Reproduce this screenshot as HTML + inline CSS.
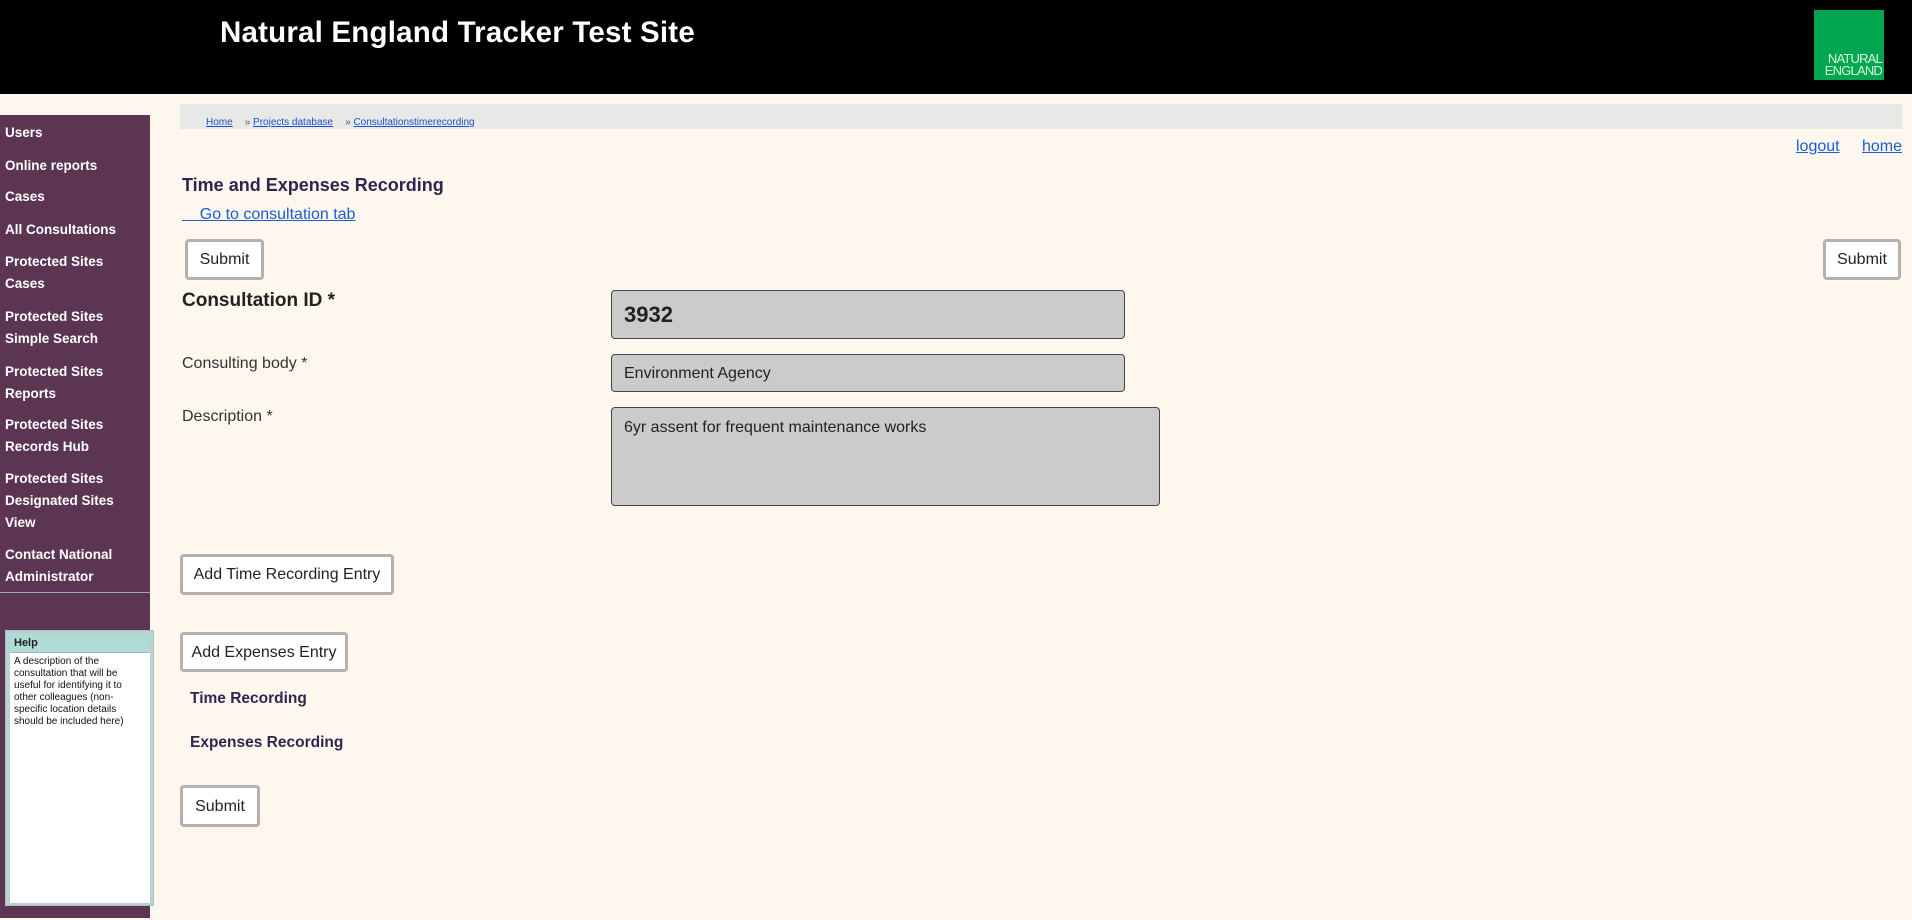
<!DOCTYPE html>
<html><head><meta charset="utf-8"><style>
*{box-sizing:border-box;margin:0;padding:0}
body{width:1912px;height:920px;background:#fef7ee;font-family:"Liberation Sans",sans-serif;position:relative;overflow:hidden;color:#222}
.a{position:absolute}
#hdr{left:0;top:0;width:1912px;height:94px;background:#000}
#title{left:220px;top:16px;color:#fff;font-size:29.5px;font-weight:bold;letter-spacing:0.2px}
#logo{left:1814px;top:10px;width:70px;height:70px;background:#00a650;color:#d8f5e0;font-size:13px;line-height:12px;text-align:right;padding:43px 2px 0 0;letter-spacing:-0.8px}
#side{left:0;top:115px;width:150px;height:803px;background:#5c3553}
.nav{position:absolute;left:5px;color:#fff;font-weight:bold;font-size:13.5px;line-height:22px}
#sline{left:0;top:592px;width:150px;height:1px;background:#9aa}
#help{left:5px;top:630px;width:149px;height:276px;background:#b9d3d2;border:1px solid #a8c0c0;padding:3px 3px 3px 4px}
#help .h{background:#b0dcd8;height:19px;font-size:11px;font-weight:bold;padding:3px 4px;border-bottom:1px solid #9bb}
#help .b{background:#fff;height:250px;font-size:10px;line-height:12px;padding:3px 4px;color:#111}
#bc{left:180px;top:104px;width:1722px;height:25px;background:#e8e8e6;font-size:10px;padding-top:13px;padding-left:26px}
#bc a{color:#1a4fd0;margin-right:12px;text-decoration:underline}
a{color:#1a5bd6}
.btn{position:absolute;background:#fff;border:3px solid #b5b0ad;border-radius:4px;font-size:16px;color:#222;text-align:center}
.lbl{position:absolute;left:182px;font-size:16px;color:#333}
.inp{position:absolute;left:611px;background:#cbcbcb;border:1px solid #444;border-radius:4px;padding-left:12px;color:#222}
h3{position:absolute;font-size:15.5px;color:#2b2850}
</style></head><body>
<div id="hdr" class="a"></div>
<div id="title" class="a">Natural England Tracker Test Site</div>
<div id="logo" class="a">NATURAL<br>ENGLAND</div>
<div id="side" class="a"></div>
<div class="nav" style="top:122px">Users</div>
<div class="nav" style="top:155px">Online reports</div>
<div class="nav" style="top:186px">Cases</div>
<div class="nav" style="top:219px">All Consultations</div>
<div class="nav" style="top:251px">Protected Sites<br>Cases</div>
<div class="nav" style="top:306px">Protected Sites<br>Simple Search</div>
<div class="nav" style="top:361px">Protected Sites<br>Reports</div>
<div class="nav" style="top:414px">Protected Sites<br>Records Hub</div>
<div class="nav" style="top:468px">Protected Sites<br>Designated Sites<br>View</div>
<div class="nav" style="top:544px">Contact National<br>Administrator</div>
<div id="sline" class="a"></div>
<div id="help" class="a"><div class="h">Help</div><div class="b">A description of the consultation that will be useful for identifying it to other colleagues (non-specific location details should be included here)</div></div>
<div id="bc" class="a"><a>Home</a><span style="color:#555">» </span><a>Projects database</a><span style="color:#555">» </span><a>Consultationstimerecording</a></div>
<a class="a" style="left:1796px;top:138px;font-size:16px;text-decoration:underline">logout</a>
<a class="a" style="left:1862px;top:138px;font-size:16px;text-decoration:underline">home</a>
<div class="a" style="left:182px;top:175px;font-size:18px;font-weight:bold;color:#2b2850">Time and Expenses Recording</div>
<a class="a" style="left:182px;top:206px;font-size:16px;text-decoration:underline;white-space:pre">    Go to consultation tab</a>
<div class="btn" style="left:185px;top:239px;width:79px;height:41px;line-height:36px">Submit</div>
<div class="btn" style="left:1823px;top:239px;width:78px;height:41px;line-height:36px">Submit</div>
<div class="lbl" style="top:290px;font-size:19px;font-weight:bold;color:#222">Consultation ID *</div>
<div class="inp" style="top:290px;width:514px;height:49px;font-size:22px;font-weight:bold;line-height:48px">3932</div>
<div class="lbl" style="top:355px">Consulting body *</div>
<div class="inp" style="top:354px;width:514px;height:38px;font-size:16px;line-height:38px">Environment Agency</div>
<div class="lbl" style="top:408px">Description *</div>
<div class="inp" style="top:407px;width:549px;height:99px;font-size:16px;padding-top:11px">6yr assent for frequent maintenance works</div>
<div class="btn" style="left:180px;top:554px;width:214px;height:41px;line-height:36px">Add Time Recording Entry</div>
<div class="btn" style="left:180px;top:632px;width:168px;height:40px;line-height:35px">Add Expenses Entry</div>
<h3 style="left:190px;top:690px">Time Recording</h3>
<h3 style="left:190px;top:734px">Expenses Recording</h3>
<div class="btn" style="left:180px;top:785px;width:80px;height:42px;line-height:37px">Submit</div>
</body></html>
